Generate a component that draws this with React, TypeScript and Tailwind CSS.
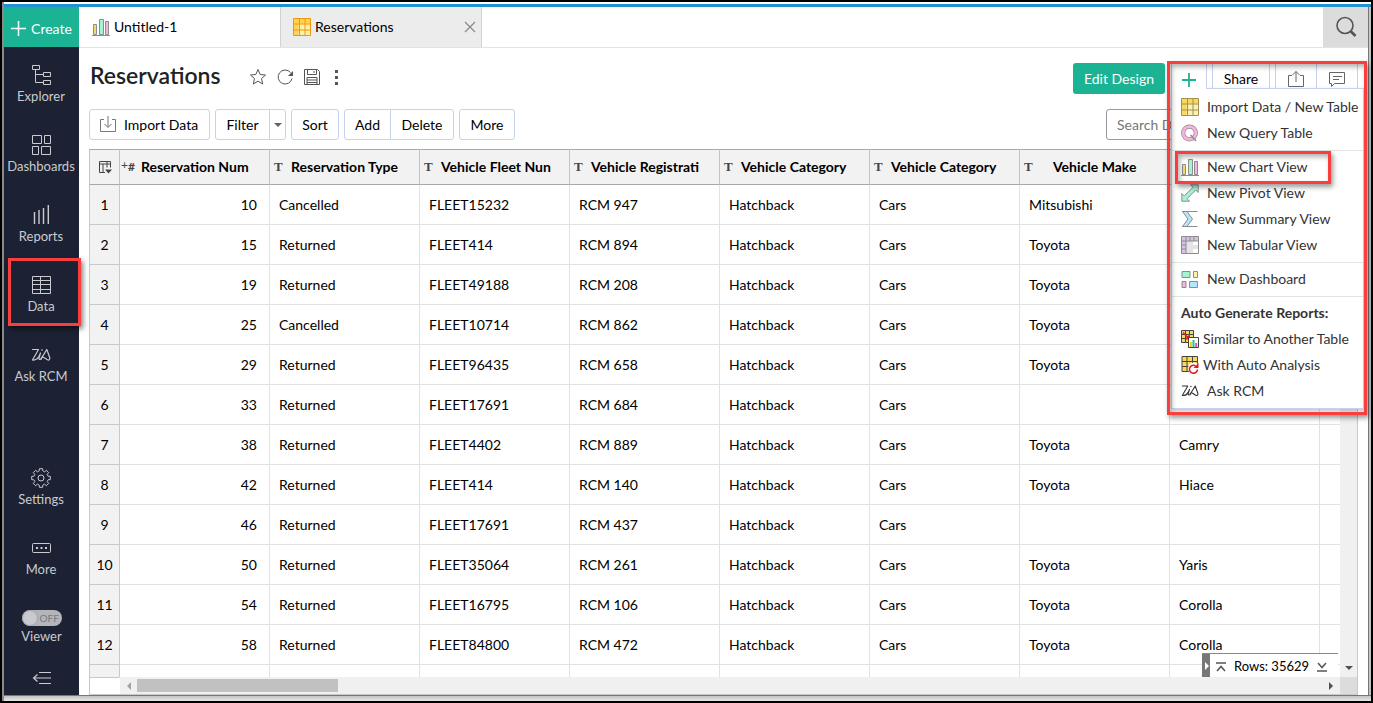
import { ReactNode } from 'react'

const columns = [
  { type: 'T', label: 'Reservation Type', indent: false },
  { type: 'T', label: 'Vehicle Fleet Nun', indent: false },
  { type: 'T', label: 'Vehicle Registrati', indent: false },
  { type: 'T', label: 'Vehicle Category', indent: false },
  { type: 'T', label: 'Vehicle Category', indent: false },
  { type: 'T', label: 'Vehicle Make', indent: true },
  { type: 'T', label: '', indent: true },
]

const rows = [
  [10, 'Cancelled', 'FLEET15232', 'RCM 947', 'Hatchback', 'Cars', 'Mitsubishi', ''],
  [15, 'Returned', 'FLEET414', 'RCM 894', 'Hatchback', 'Cars', 'Toyota', ''],
  [19, 'Returned', 'FLEET49188', 'RCM 208', 'Hatchback', 'Cars', 'Toyota', ''],
  [25, 'Cancelled', 'FLEET10714', 'RCM 862', 'Hatchback', 'Cars', 'Toyota', ''],
  [29, 'Returned', 'FLEET96435', 'RCM 658', 'Hatchback', 'Cars', 'Toyota', ''],
  [33, 'Returned', 'FLEET17691', 'RCM 684', 'Hatchback', 'Cars', '', ''],
  [38, 'Returned', 'FLEET4402', 'RCM 889', 'Hatchback', 'Cars', 'Toyota', 'Camry'],
  [42, 'Returned', 'FLEET414', 'RCM 140', 'Hatchback', 'Cars', 'Toyota', 'Hiace'],
  [46, 'Returned', 'FLEET17691', 'RCM 437', 'Hatchback', 'Cars', '', ''],
  [50, 'Returned', 'FLEET35064', 'RCM 261', 'Hatchback', 'Cars', 'Toyota', 'Yaris'],
  [54, 'Returned', 'FLEET16795', 'RCM 106', 'Hatchback', 'Cars', 'Toyota', 'Corolla'],
  [58, 'Returned', 'FLEET84800', 'RCM 472', 'Hatchback', 'Cars', 'Toyota', 'Corolla'],
]

function Icon({ children, size = 20, className = '' }: { children: ReactNode; size?: number; className?: string }) {
  return (
    <svg
      width={size}
      height={size}
      viewBox={`0 0 ${size} ${size}`}
      fill="none"
      stroke="currentColor"
      className={`shrink-0 ${className}`}
      aria-hidden="true"
    >
      {children}
    </svg>
  )
}

/* Sidebar icons */

const ExplorerIcon = () => (
  <Icon>
    <path d="M1.500.5h7v4h-7zM12.500 7.500h7v4h-7zM12.500 15.500h7v4h-7zM4.500 4.500v13h8M4.500 9.500h8" />
  </Icon>
)

const DashboardsIcon = () => (
  <Icon>
    <path d="M1.500.5h9v8h-9zM13.500.5h6v8h-6zM1.500 11.500h6v8h-6zM10.500 11.500h9v8h-9z" />
  </Icon>
)

const ReportsIcon = () => (
  <Icon>
    <path d="M3.500 7v12M8 5v14M12.500 3v16M17.300 0v19" strokeWidth="1.400" />
  </Icon>
)

const DataIcon = () => (
  <Icon>
    <path d="M1.500 1.500h18v17h-18zM1.500 5.500h18M1.500 9.500h18M1.500 14.500h18M9.500 1.500v17" />
  </Icon>
)

const ZiaIcon = ({ size = 20 }: { size?: number }) => (
  <svg width={size} height={size} viewBox="0 0 20 20" fill="none" stroke="currentColor" className="shrink-0" aria-hidden="true">
    <path
      d="M1.500 4.500h6L1.500 15c2.800.3 4.800-.6 6.300-3.200L9.500 8 8 12.800c-.3 1.800 1 2.200 2.200.8L15.800 4.500l2.900 8c.5 2-.8 3-2.200 2.300l-4.200-2.600c-1.400-.7-2.600.6-1.900 2"
      strokeLinecap="round"
      strokeLinejoin="round"
      strokeWidth="1.200"
    />
    <circle cx="11" cy="5" r=".8" fill="currentColor" stroke="none" />
  </svg>
)

const gear = Array.from({ length: 8 }, (_, i) => {
  const p = (r: number, deg: number) => {
    const a = ((i * 45 + deg) * Math.PI) / 180
    return `${(10 + r * Math.sin(a)).toFixed(1)} ${(10 - r * Math.cos(a)).toFixed(1)}`
  }
  return `${i ? 'L' : 'M'}${p(7.2, -15)}L${p(9.4, -10)}L${p(9.4, 10)}L${p(7.2, 15)}L${p(7, 22)}`
}).join('')

const SettingsIcon = () => (
  <Icon>
    <path d={`${gear}Z`} strokeLinejoin="round" />
    <circle cx="10" cy="10" r="3" />
  </Icon>
)

const MoreIcon = () => (
  <Icon>
    <rect x="1.500" y="5.500" width="18" height="9" rx="1" />
    <path d="M5 10h2M9.500 10h2M14 10h2" strokeWidth="2" />
  </Icon>
)

const CollapseIcon = () => (
  <Icon>
    <path d="M8 4.500h12M3 10h17M8 15.500h12M6.500 6.500L2.500 10l4 3.500" strokeWidth="1.200" />
  </Icon>
)

/* Coloured view icons */

const ChartIcon = () => (
  <Icon size={18} className="text-[#8d8d8d]">
    <path d="M1.500 6.500h3v10h-3z" fill="#f8dc62" />
    <path d="M7.500 1.500h4v15h-4z" fill="#a5f3d2" />
    <path d="M13.500 3.500h3v13h-3z" fill="#f6b3de" />
    <path d="M0 17.500h18" />
  </Icon>
)

const GridIcon = ({ stroke = '#a08f58', light = '#fdf1b0', dark = '#f9d95a' }) => (
  <Icon size={18}>
    <path d="M.5.5h17v17H.5z" fill={light} stroke="none" />
    <path d="M.5.5h17v5H.5zM.5.5h5v17h-5z" fill={dark} stroke="none" />
    <path d="M.5.5h17v17H.5zM.5 6h17M.5 12h17M6.500.5v17M12 .5v17" stroke={stroke} />
  </Icon>
)

const QueryIcon = () => (
  <Icon size={18}>
    <circle cx="8.500" cy="9" r="6.300" stroke="#8d8d8d" strokeWidth="4.200" />
    <circle cx="8.500" cy="9" r="6.300" stroke="#f6b3de" strokeWidth="2.800" />
    <path d="M9.500 11l5.500 6" stroke="#8d8d8d" strokeWidth="1.500" />
  </Icon>
)

const PivotIcon = () => (
  <Icon size={18}>
    <path d="M9.500.8h7.700v7.700l-2.500-2.500-8.700 8.700 2.500 2.500H.8V9.500l2.500 2.500L12 3.300z" fill="#a5f3d2" stroke="#8d8d8d" />
  </Icon>
)

const SummaryIcon = () => (
  <Icon size={18}>
    <path d="M1.500 1.500h4.500L11.500 9 6 16.500H1.500L7 9z" fill="#b5e6fb" stroke="#8d8d8d" />
    <path d="M1 1.500h15.500M1 16.500h15.500" stroke="#8d8d8d" />
  </Icon>
)

const TabularIcon = () => (
  <Icon size={18}>
    <path d="M.5.500h17v17H.5z" fill="#e4e4e4" stroke="none" />
    <path d="M.5.500h17v4.500H.5zM.5.500H5v17H.5z" fill="#d6c2e6" stroke="none" />
    <path d="M12 5h5v4h-5zM12 13h5v4h-5z" fill="#fff" stroke="none" />
    <path d="M.5.500h17v17H.5zM.5 5h17M.5 9H5M.5 13H5M5 .500v17M9 .500V5M13 .500V5" stroke="#8d8d8d" />
  </Icon>
)

const DashboardIcon = () => (
  <Icon size={18}>
    <path d="M1 1.500h8v6H1z" fill="#a5f3d2" stroke="#8d8d8d" />
    <path d="M12.500 1.500h4v6h-4z" fill="#fdf1b0" stroke="#8d8d8d" />
    <path d="M1 11.500h4v6H1z" fill="#f6b3de" stroke="#8d8d8d" />
    <path d="M8.500 11.500h8v6h-8z" fill="#b5e6fb" stroke="#8d8d8d" />
  </Icon>
)

const SimilarIcon = () => (
  <Icon size={18}>
    <path d="M.5.500h12v12H.5zM.5 4.500h12M.5 8.500h12M4.500.500v12M8.500.500v12" fill="#f9d95a" stroke="#444" />
    <path d="M2 2.500l5 5" stroke="#e01b1b" strokeWidth="1.500" />
    <path d="M9 4v5.500H3.500z" fill="#e01b1b" stroke="none" />
    <path d="M7.500 7.500h10v10h-10z" fill="#fff" stroke="#444" />
    <path d="M9.800 12v5" stroke="#f5c518" strokeWidth="2" />
    <path d="M12.500 10v7" stroke="#23c483" strokeWidth="2" />
    <path d="M15.200 13v4" stroke="#e052b8" strokeWidth="2" />
  </Icon>
)

const AnalysisIcon = () => (
  <Icon size={18}>
    <path d="M1 .500h15.500v15H1zM1 5.500h15.500M1 10.500h15.500M6 .500v15M11.500.500v15" fill="#f9d95a" stroke="#444" />
    <circle cx="13" cy="12.500" r="6" fill="#fff" stroke="none" />
    <path d="M16.500 13.500a4 4 0 1 1-2-3.700" stroke="#e01b1b" strokeWidth="1.500" />
    <path d="M17.500 7v5h-5z" fill="#e01b1b" stroke="none" />
  </Icon>
)

const SideItem = ({ icon, label }: { icon: ReactNode; label: string }) => (
  <button type="button" className="flex h-[70px] w-full shrink-0 flex-col items-center gap-px pt-[18px] pr-px whitespace-nowrap">
    {icon}
    <span className="text-[13px] leading-5">{label}</span>
  </button>
)

const MenuItem = ({ icon, label, tight = false }: { icon: ReactNode; label: string; tight?: boolean }) => (
  <button
    type="button"
    role="menuitem"
    className={`flex h-[26px] w-full items-center pl-[9px] text-left ${tight ? 'gap-1' : 'gap-2'}`}
  >
    {icon}
    <span className="whitespace-nowrap">{label}</span>
  </button>
)

function Sidebar() {
  return (
    <aside className="flex w-[75px] shrink-0 flex-col bg-[#1c2233] text-[#c9cbd0]">
      <button type="button" className="flex h-10 shrink-0 items-center justify-center gap-1 bg-[#1bb394] pt-[3px] text-sm text-white">
        <Icon size={16}>
          <path d="M7.500 0v15M0 7.500h15" strokeWidth="1.500" />
        </Icon>
        Create
      </button>
      <nav className="flex min-h-0 flex-1 flex-col">
        <SideItem icon={<ExplorerIcon />} label="Explorer" />
        <SideItem icon={<DashboardsIcon />} label="Dashboards" />
        <SideItem icon={<ReportsIcon />} label="Reports" />
        <div className="relative">
          <SideItem icon={<DataIcon />} label="Data" />
          <div className="pointer-events-none absolute top-px -right-[2px] left-1 z-10 h-[68px] border-3 border-[#fa3e3e] shadow-[2px_3px_5px_rgba(0,0,0,0.5)]" />
        </div>
        <SideItem icon={<ZiaIcon />} label="Ask RCM" />
        <div className="flex-1" />
        <SideItem icon={<SettingsIcon />} label="Settings" />
        <SideItem icon={<MoreIcon />} label="More" />
        <label className="flex flex-col items-center pt-5">
          <input type="checkbox" className="sr-only" />
          <span className="flex h-4 w-10 items-center rounded-full bg-[#b4b5ba] text-[10px] text-[#77797f]">
            <span className="mr-[2px] size-4 rounded-full border border-[#a5a6ab] bg-[#c9cacf]" />
            OFF
          </span>
          <span className="text-[13px] leading-5">Viewer</span>
        </label>
        <button type="button" aria-label="Collapse" className="flex h-[49px] shrink-0 justify-center pt-[22px] pr-px">
          <CollapseIcon />
        </button>
      </nav>
    </aside>
  )
}

function Tabs() {
  return (
    <div className="flex h-[41px] shrink-0 border-b border-[#e3e3e3] text-sm">
      <button type="button" className="flex w-[201px] items-center gap-1 pl-[13px]">
        <ChartIcon />
        Untitled-1
      </button>
      <div className="flex w-[202px] items-center border-x border-[#d3d3d3] bg-[#ececec] pr-[5px] pl-3">
        <button type="button" className="flex flex-1 items-center gap-1">
          <GridIcon stroke="#f0960f" light="#fff1a8" dark="#ffd34f" />
          Reservations
        </button>
        <button type="button" aria-label="Close tab" className="text-[#8a8a8a]">
          <Icon size={12}>
            <path d="M1 1l10 10M11 1L1 11" strokeWidth="1.200" />
          </Icon>
        </button>
      </div>
      <div className="flex-1" />
      <button type="button" aria-label="Search" className="flex w-[45px] items-center justify-center bg-[#dcdcdc] text-[#555]">
        <Icon size={22}>
          <circle cx="10" cy="9.500" r="8" strokeWidth="1.600" />
          <path d="M15.500 15l5 5" strokeWidth="2.600" />
        </Icon>
      </button>
    </div>
  )
}

function CreateMenu() {
  return (
    <div
      role="menu"
      className="absolute top-[25px] -right-[6px] left-0 z-20 h-[321px] border border-[#c9d2ec] bg-white pt-[5px] text-sm text-[#333] shadow-[1px_2px_4px_rgba(0,0,0,0.25)]"
    >
      <MenuItem icon={<GridIcon />} label="Import Data / New Table" />
      <MenuItem icon={<QueryIcon />} label="New Query Table" />
      <div className="relative mt-[4px] border-t border-[#e3e3e3] pt-[3px]">
        <MenuItem icon={<ChartIcon />} label="New Chart View" />
        <div className="pointer-events-none absolute top-0 right-[32px] left-[3px] h-[33px] border-3 border-[#fa3e3e] shadow-[2px_3px_5px_rgba(0,0,0,0.4),inset_2px_3px_5px_rgba(0,0,0,0.3)]" />
        <MenuItem icon={<PivotIcon />} label="New Pivot View" />
        <MenuItem icon={<SummaryIcon />} label="New Summary View" />
        <MenuItem icon={<TabularIcon />} label="New Tabular View" />
      </div>
      <div className="mt-[4px] border-t border-[#e3e3e3] pt-[3px]">
        <MenuItem icon={<DashboardIcon />} label="New Dashboard" />
      </div>
      <div className="mt-[4px] border-t border-[#e3e3e3] pt-[3px]">
        <div className="flex h-[26px] items-center pl-[9px] font-bold">Auto Generate Reports:</div>
        <MenuItem icon={<SimilarIcon />} label="Similar to Another Table" tight />
        <MenuItem icon={<AnalysisIcon />} label="With Auto Analysis" tight />
        <MenuItem icon={<ZiaIcon size={18} />} label="Ask RCM" />
      </div>
    </div>
  )
}

function TitleBar() {
  return (
    <header className="flex h-[62px] shrink-0 items-start pt-[15px] pr-[10px] pl-[11px]">
      <h1 className="text-[23px] leading-6 font-semibold text-[#222]">Reservations</h1>
      <div className="ml-7 flex items-center gap-[9px] pt-[5px] text-[#555]">
        <button type="button" aria-label="Favourite">
          <Icon size={18}>
            <path d="M9 1.500l2.200 5 5.300.5-4 3.600 1.200 5.400L9 13.200 4.300 16l1.200-5.400-4-3.600 5.300-.5z" />
          </Icon>
        </button>
        <button type="button" aria-label="Refresh">
          <Icon size={18}>
            <path d="M16 10.500a7 7 0 1 1-1.500-6" />
            <path d="M17 3v5h-5z" fill="currentColor" stroke="none" />
          </Icon>
        </button>
        <button type="button" aria-label="Save">
          <Icon size={18}>
            <path d="M1.500 1.500h13l2 2v13h-15zM4.500 1.500v5h9v-5M11 3v2M4 16.500v-7h10v7M4 12h10M4 14.500h10" />
          </Icon>
        </button>
        <button type="button" aria-label="More options">
          <Icon size={16}>
            <path d="M5 1h3v3H5zM5 7h3v3H5zM5 13h3v3H5z" fill="currentColor" stroke="none" />
          </Icon>
        </button>
      </div>
      <div className="flex-1" />
      <button type="button" className="h-[31px] w-[92px] rounded-[3px] bg-[#1bb394] text-sm text-white">
        Edit Design
      </button>
      <div className="relative ml-[6px] flex text-sm">
        <button
          type="button"
          aria-label="New"
          aria-expanded="true"
          className="z-30 flex h-[26px] w-9 items-center justify-center border-x border-t border-[#c9d2ec] bg-white pt-[6px] text-[#1bb394]"
        >
          <Icon size={14}>
            <path d="M7 0v14M0 7h14" strokeWidth="1.800" />
          </Icon>
        </button>
        <button type="button" className="ml-[5px] h-[31px] w-[58px] border border-[#c9d2ec]">Share</button>
        <button type="button" aria-label="Export" className="ml-[5px] flex h-[31px] w-[42px] items-center justify-center border border-[#c9d2ec] text-[#666]">
          <Icon size={18}>
            <path d="M5 5.500H1.500v11h15v-11H13M9 12V1.500M5.500 5L9 1.500 12.500 5" />
          </Icon>
        </button>
        <button type="button" aria-label="Comments" className="flex h-[31px] w-[41px] items-center justify-center border-y border-r border-[#c9d2ec] text-[#666]">
          <Icon size={18}>
            <path d="M1.500 2.500h15v11h-10l-3 3v-3h-2zM5 6.500h9M5 9.500h6" />
          </Icon>
        </button>
        <CreateMenu />
        <div className="pointer-events-none absolute -top-[2px] -right-[9px] -left-1 z-40 h-[354px] border-3 border-[#fa3e3e] shadow-[2px_3px_5px_rgba(0,0,0,0.4),inset_2px_3px_5px_rgba(0,0,0,0.3)]" />
      </div>
    </header>
  )
}

const toolButton = 'h-[31px] rounded-[3px] border border-[#c9d2ec] bg-white'

function Toolbar() {
  return (
    <div className="-mt-px flex h-10 shrink-0 items-start gap-[5px] pr-[11px] pl-[10px] text-sm">
      <button type="button" className={`${toolButton} flex w-[121px] items-center gap-[7px] pl-[9px]`}>
        <Icon size={18} className="text-[#777]">
          <path d="M5 3.500H1.500v12h15v-12H13M9 0v11M5.500 8L9 11.500 12.500 8" />
        </Icon>
        Import Data
      </button>
      <div className={`${toolButton} flex w-[71px]`}>
        <button type="button" className="flex-1">Filter</button>
        <button type="button" aria-label="Filter options" className="flex w-4 items-center justify-center border-l border-[#c9d2ec] text-[#666]">
          <Icon size={8}>
            <path d="M0 2h8L4 6z" fill="currentColor" stroke="none" />
          </Icon>
        </button>
      </div>
      <button type="button" className={`${toolButton} w-12`}>Sort</button>
      <div className={`${toolButton} flex w-[110px]`}>
        <button type="button" className="w-[46px] border-r border-[#c9d2ec]">Add</button>
        <button type="button" className="flex-1">Delete</button>
      </div>
      <button type="button" className={`${toolButton} w-14`}>More</button>
      <div className="flex-1" />
      <input
        type="text"
        aria-label="Search Data"
        placeholder="Search Data"
        className="h-[31px] w-[251px] rounded-[3px] border border-[#999] px-[10px] placeholder:text-[#777]"
      />
    </div>
  )
}

function DataTable() {
  return (
    <table className="w-[1381px] table-fixed border-separate border-spacing-0 text-sm">
      <colgroup>
        <col className="w-[31px]" />
        <col className="w-[150px]" />
        {columns.map((_, i) => (
          <col key={i} className="w-[150px]" />
        ))}
        <col className="w-[150px]" />
      </colgroup>
      <thead>
        <tr className="h-9 bg-[#f2f2f2]">
          <th className="border-x border-y border-[#c4c4c4] border-y-[#a8a8a8] p-0">
            <Icon size={14} className="mx-auto text-[#444]">
              <path d="M7 12.500H1.500v-11h11v6M1.500 4h11M5 4v8.500M9 1.500v6" />
              <path d="M7 9.500h7l-3.500 4z" fill="currentColor" stroke="none" />
            </Icon>
          </th>
          <th className="border-y border-r border-[#c4c4c4] border-y-[#a8a8a8] p-0 text-left font-bold">
            <div className="flex items-center pl-px whitespace-nowrap">
              <span className="-mt-1 text-xs font-normal text-[#444]">+</span>
              <span className="mr-[6px] text-xs text-[#444]">#</span>
              Reservation Num
            </div>
          </th>
          {columns.map((col, i) => (
            <th key={i} className="border-y border-r border-[#c4c4c4] border-y-[#a8a8a8] p-0 text-left font-bold">
              <div className="flex items-center pl-1 whitespace-nowrap">
                <span className="w-[9px] font-['Liberation_Serif',serif] text-[13px] text-[#444]">{col.type}</span>
                <span className={col.indent ? 'pl-5' : 'pl-2'}>{col.label}</span>
              </div>
            </th>
          ))}
          <th className="border-y border-[#a8a8a8] p-0" />
        </tr>
      </thead>
      <tbody>
        {rows.map((row, r) => (
          <tr key={r} className="h-10">
            <td className="border-x border-b border-[#c9c9c9] bg-[#f2f2f2] p-0 text-center">{r + 1}</td>
            {row.map((cell, c) => (
              <td key={c} className={`border-r border-b border-[#e2e2e2] py-0 ${c === 0 ? 'pr-3 text-right' : 'pl-[9px]'}`}>
                {cell}
              </td>
            ))}
            <td className="border-b border-[#e2e2e2]" />
          </tr>
        ))}
        <tr className="h-10">
          <td className="border-x border-[#c9c9c9] bg-[#f2f2f2]" />
          {rows[0].map((_, c) => (
            <td key={c} className="border-r border-[#e2e2e2]" />
          ))}
          <td />
        </tr>
      </tbody>
    </table>
  )
}

function RowCount() {
  return (
    <div className="absolute right-[2px] bottom-0 flex h-6 w-[136px] border-t border-[#888] bg-white text-[13px]">
      <button type="button" aria-label="Hide row count" className="mr-[6px] flex h-full w-2 items-center bg-[#777] text-white">
        <Icon size={8}>
          <path d="M3 0l4 4-4 4z" fill="currentColor" stroke="none" />
        </Icon>
      </button>
      <div className="flex items-center pt-[3px]">
        <button type="button" aria-label="First row" className="mr-2 text-[#555]">
          <Icon size={10}>
            <path d="M0 1h10M1 9l4-4.500L9 9" strokeWidth="1.500" />
          </Icon>
        </button>
        <span className="whitespace-nowrap">Rows: 35629</span>
        <button type="button" aria-label="Last row" className="ml-2 text-[#555]">
          <Icon size={10}>
            <path d="M0 9h10M1 1l4 4.500L9 1" strokeWidth="1.500" />
          </Icon>
        </button>
      </div>
    </div>
  )
}

export default function App() {
  return (
    <div className="h-screen overflow-hidden bg-black p-[2px] font-[Lato,sans-serif] text-black">
      <div className="flex h-full flex-col border-l-2 border-[#8a8a8a] bg-white pt-[2px]">
        <div className="h-[3px] shrink-0 bg-[#2191d0]" />
        <div className="flex min-h-0 flex-1 border-b border-[#777]">
          <Sidebar />
          <main className="flex min-w-0 flex-1 flex-col">
            <Tabs />
            <TitleBar />
            <Toolbar />
            <div className="mr-[10px] ml-[10px] flex min-h-0 flex-1 flex-col border-r border-b border-[#c9c9c9]">
              <div className="flex min-h-0 flex-1">
                <div className="relative min-w-0 flex-1 overflow-hidden">
                  <DataTable />
                  <RowCount />
                </div>
                <div className="flex w-[17px] flex-col items-center justify-end bg-[#f0f0f0] pb-[5px]">
                  <Icon size={8} className="text-[#505050]">
                    <path d="M0 2h8L4 6z" fill="currentColor" stroke="none" />
                  </Icon>
                </div>
              </div>
              <div className="flex h-[17px] shrink-0 border-l border-[#c9c9c9]">
                <div className="w-[30px] border-t border-r border-[#c9c9c9] border-r-transparent" />
                <div className="flex flex-1 items-center justify-between bg-[#f0f0f0] px-[5px]">
                  <div className="flex items-center gap-[4px]">
                    <Icon size={8} className="text-[#a3a3a3]">
                      <path d="M6 0v8L2 4z" fill="currentColor" stroke="none" />
                    </Icon>
                    <div className="h-[13px] w-[201px] bg-[#c1c1c1]" />
                  </div>
                  <Icon size={8} className="text-[#505050]">
                    <path d="M2 0v8l4-4z" fill="currentColor" stroke="none" />
                  </Icon>
                </div>
                <div className="w-[17px] bg-[#dcdcdc]" />
              </div>
            </div>
          </main>
          <div className="w-[3px] border-l border-[#777] bg-[#c4c4c4]" />
        </div>
        <div className="h-[5px] shrink-0 bg-linear-to-b from-[#c4c4c4] to-[#e6e6e6]" />
      </div>
    </div>
  )
}
